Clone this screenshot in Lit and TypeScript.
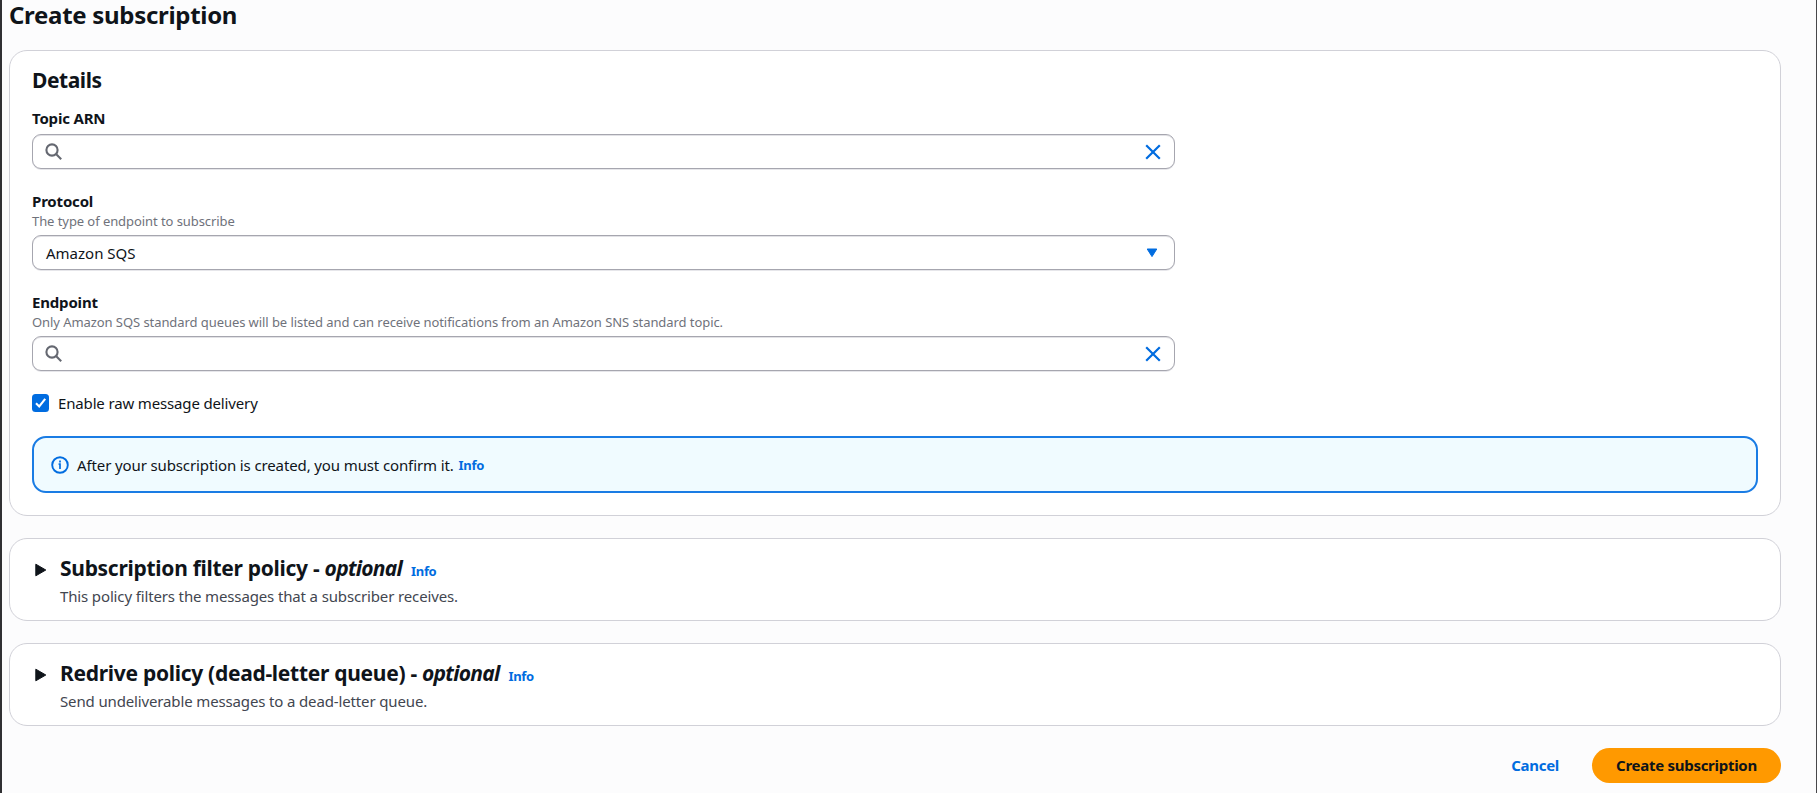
import { LitElement, html, css, nothing } from "lit";
import { customElement, property } from "lit/decorators.js";

const searchIcon = html`<svg class="search" width="18" height="18" viewBox="0 0 18 18" fill="none" stroke="#656871" stroke-width="2.1">
  <circle cx="7" cy="7" r="5.6" /><path d="M11 11l5.2 5.2" />
</svg>`;

const closeIcon = html`<svg width="16" height="16" viewBox="0 0 16 16" fill="none" stroke="#006ce0" stroke-width="2.2">
  <path d="M1.2 1.2l13.6 13.6M14.8 1.2L1.2 14.8" />
</svg>`;

@customElement("form-field")
class FormField extends LitElement {
  @property() label = "";
  @property() hint = "";
  @property() value = "";
  @property() kind = "search";

  static styles = css`
    :host { display: block; width: 1143px; }
    .label { font-size: 15px; line-height: 18px; padding-bottom: 2px; font-weight: 700; letter-spacing: -0.18px; color: #0f141a; }
    .hint { margin-top: 1px; padding-bottom: 1px; font-size: 13px; line-height: 16px; letter-spacing: -0.07px; color: #6f727b; }
    .box {
      box-sizing: border-box; display: flex; align-items: center; justify-content: space-between;
      height: 35px; margin-top: 5px; padding: 0 13px 0 12px;
      border: 1px solid #a6a6af; border-radius: 9px; background: #fff;
      box-shadow: inset 0 1px 0 #e2e2e6, 0 1px 0 #e6e6ea;
    }
    .value { margin-left: 1px; font-size: 15px; line-height: 20px; color: #0f141a; }
    .caret { margin-right: 3px; }
    svg { display: block; }
  `;

  render() {
    return html`
      <div class="label">${this.label}</div>
      ${this.hint ? html`<div class="hint">${this.hint}</div>` : nothing}
      <div class="box">
        ${this.kind === "search"
          ? html`${searchIcon}${closeIcon}`
          : html`<span class="value">${this.value}</span>
              <svg class="caret" width="12" height="10" viewBox="0 0 12 10" fill="#006ce0" stroke="#006ce0" stroke-width="1" stroke-linejoin="round">
                <path d="M1.2 1H10.8L6 8.6z" />
              </svg>`}
      </div>
    `;
  }
}

@customElement("expandable-card")
class ExpandableCard extends LitElement {
  @property() heading = "";
  @property() description = "";

  static styles = css`
    :host {
      box-sizing: border-box; display: flex; height: 83px; padding: 17px 25px;
      border: 1px solid #d1d1d8; border-radius: 18px; background: #fff;
    }
    .arrow { display: block; flex: none; margin: 7px 13px 0 0; }
    .heading { display: flex; align-items: baseline; font-size: 21px; line-height: 25px; padding-bottom: 1px; font-weight: 700; color: #0f141a; white-space: pre; letter-spacing: -0.29px; }
    .optional { font-style: italic; letter-spacing: -0.75px; }
    .info { margin-left: 9px; font-size: 13px; line-height: 20px; letter-spacing: -0.3px; color: #006ce0; }
    .description { margin-top: 4px; font-size: 15px; line-height: 20px; letter-spacing: -0.14px; color: #424650; }
  `;

  render() {
    return html`
      <svg class="arrow" width="12" height="14" viewBox="0 0 12 14" fill="#0f141a" stroke="#0f141a" stroke-width="1" stroke-linejoin="round">
        <path d="M.8 1.2L10.8 7 .8 12.8z" />
      </svg>
      <div>
        <div class="heading"><span>${this.heading} - </span><span class="optional">optional</span><span class="info">Info</span></div>
        <div class="description">${this.description}</div>
      </div>
    `;
  }
}

@customElement("app-root")
class AppRoot extends LitElement {
  static styles = css`
    :host {
      box-sizing: border-box; display: block; height: 793px; overflow: hidden;
      padding: 0 35px 0 7px; border-left: 2px solid #303033; border-right: 1px solid #48484b;
      background: #fcfcfd; font-family: "Noto Sans", sans-serif; color: #0f141a;
    }
    .title { margin: 0 0 20px; font-size: 24px; line-height: 29px; font-weight: 700; letter-spacing: -0.3px; height: 30px; }
    .stack { display: flex; flex-direction: column; gap: 22px; }
    .card {
      box-sizing: border-box; height: 466px; padding: 16px 22px 0;
      border: 1px solid #d1d1d8; border-radius: 18px; background: #fff;
    }
    .subtitle { margin: 0 0 16px; font-size: 21px; line-height: 26px; font-weight: 700; letter-spacing: -0.45px; }
    .fields { display: flex; flex-direction: column; gap: 23px; }
    .check { display: flex; align-items: center; gap: 9px; margin: 22px 0 23px; height: 20px; font-size: 15px; line-height: 20px; letter-spacing: -0.15px; }
    .alert {
      box-sizing: border-box; display: flex; align-items: center; height: 57px; padding: 0 17px;
      border: 2px solid #1a7ce4; border-radius: 14px; background: #f0fbff;
      font-size: 15px; line-height: 20px; letter-spacing: -0.12px;
    }
    .alert svg { margin-right: 8px; }
    .info { margin-left: 5px; font-size: 13px; font-weight: 700; letter-spacing: -0.3px; color: #006ce0; }
    .actions { display: flex; justify-content: flex-end; align-items: center; gap: 33px; font-size: 15px; font-weight: 700; letter-spacing: -0.28px; }
    .cancel { height: 21px; line-height: 20px; color: #006ce0; }
    .primary { box-sizing: border-box; width: 189px; height: 35px; line-height: 35px; border-radius: 18px; background: #ff9900; text-align: center; }
    svg { display: block; flex: none; }
  `;

  render() {
    return html`
      <h1 class="title">Create subscription</h1>
      <div class="stack">
        <section class="card">
          <h2 class="subtitle">Details</h2>
          <div class="fields">
            <form-field label="Topic ARN"></form-field>
            <form-field label="Protocol" hint="The type of endpoint to subscribe" kind="select" value="Amazon SQS"></form-field>
            <form-field
              label="Endpoint"
              hint="Only Amazon SQS standard queues will be listed and can receive notifications from an Amazon SNS standard topic."
            ></form-field>
          </div>
          <div class="check">
            <svg width="17" height="18" viewBox="0 0 17 18">
              <rect width="17" height="18" rx="3.5" fill="#006ce0" />
              <path d="M4 9.3l3.2 3.2 6-7.6" fill="none" stroke="#fff" stroke-width="2.1" />
            </svg>
            <span>Enable raw message delivery</span>
          </div>
          <div class="alert">
            <svg width="18" height="18" viewBox="0 0 18 18" fill="none" stroke="#006ce0" stroke-width="1.9">
              <circle cx="9" cy="9" r="7.8" />
              <path d="M9 4.5v2M7.6 8.2H9v4.9" stroke-width="1.7" />
            </svg>
            <span>After your subscription is created, you must confirm it.</span>
            <span class="info">Info</span>
          </div>
        </section>
        <expandable-card
          heading="Subscription filter policy"
          description="This policy filters the messages that a subscriber receives."
        ></expandable-card>
        <expandable-card
          heading="Redrive policy (dead-letter queue)"
          description="Send undeliverable messages to a dead-letter queue."
        ></expandable-card>
        <div class="actions">
          <span class="cancel">Cancel</span>
          <span class="primary">Create subscription</span>
        </div>
      </div>
    `;
  }
}
